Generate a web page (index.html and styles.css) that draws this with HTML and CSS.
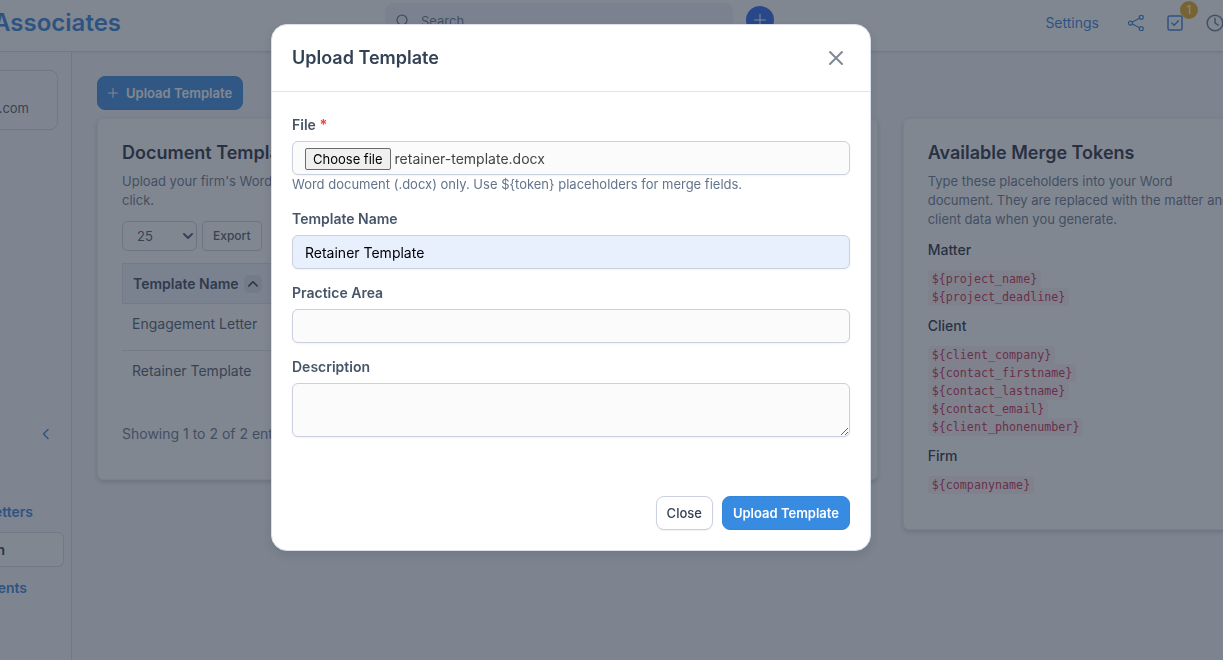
FILE: index.html
```html
<!DOCTYPE html>
<html lang="en">
<head>
<meta charset="utf-8">
<title>Upload Template</title>
<link rel="stylesheet" href="styles.css">
</head>
<body>
<header class="topbar">
  <a class="brand" href="#">Associates</a>
  <div class="search">
    <svg class="icon" viewBox="0 0 16 16"><circle cx="7" cy="7" r="5"/><path d="M10.6 10.6 14 14"/></svg>
    <input class="search-input" type="search" placeholder="Search" aria-label="Search">
  </div>
  <button class="quick-add" aria-label="Create"><svg class="icon" viewBox="0 0 16 16"><path d="M8 1.5v13M1.5 8h13"/></svg></button>
  <nav class="top-links">
    <a class="settings" href="#">Settings</a>
    <a class="top-icon" href="#" aria-label="Share"><svg class="icon" viewBox="0 0 16 16"><circle cx="2.5" cy="8" r="2"/><circle cx="13.3" cy="2.3" r="2"/><circle cx="13.3" cy="13.7" r="2"/><path d="m4.3 7 7.2-3.8M4.3 9l7.2 3.8"/></svg></a>
    <a class="top-icon tasks" href="#" aria-label="Tasks"><svg class="icon check-icon" viewBox="0 0 16 16"><rect x="1" y="1" width="14" height="14" rx="1.5"/><path d="m4.8 8 2.3 2.3 4.3-4.6"/></svg><span class="badge">1</span></a>
    <a class="top-icon clock" href="#" aria-label="Timers"><svg class="icon" viewBox="0 0 18 18"><circle cx="9" cy="9" r="7.8"/><path d="M9 4.2V9l3.2 2.2"/></svg></a>
  </nav>
</header>

<div class="shell">
  <aside class="sidebar">
    <div class="profile"><span>t.com</span></div>
    <button class="collapse" aria-label="Collapse menu"><svg class="icon" viewBox="0 0 12 12"><path d="M8 1.5 3.5 6 8 10.5"/></svg></button>
    <nav class="side-nav">
      <a class="side-link first" href="#">etters</a>
      <a class="side-link active" href="#">n</a>
      <a class="side-link last" href="#">ents</a>
    </nav>
  </aside>

  <main class="main">
    <button class="btn btn-primary page-action"><svg class="icon" viewBox="0 0 12 12"><path d="M6 .5v11M.5 6h11"/></svg>Upload Template</button>
    <div class="columns">
      <section class="card">
        <h2 class="heading">Document Templates</h2>
        <p class="lead">Upload your firm's Word templates once, then generate a document with one<br>click.</p>
        <div class="tools">
          <span class="select-wrap">
            <select class="length" aria-label="Rows per page"><option>25</option></select>
            <svg class="icon" viewBox="0 0 10 10"><path d="m1 3 4 4 4-4"/></svg>
          </span>
          <button class="export">Export</button>
        </div>
        <table class="table">
          <thead><tr><th><span class="th-inner">Template Name <span class="sort"><svg class="icon" viewBox="0 0 10 10"><path d="m.8 7 4.2-4.2L9.2 7"/></svg></span></span></th></tr></thead>
          <tbody><tr><td>Engagement Letter</td></tr><tr><td>Retainer Template</td></tr></tbody>
        </table>
        <p class="summary">Showing 1 to 2 of 2 entries</p>
      </section>

      <section class="card">
        <h2 class="heading">Available Merge Tokens</h2>
        <p class="lead">Type these placeholders into your Word document. They are replaced with the matter and client data when you generate.</p>
        <h3 class="group">Matter</h3>
        <ul class="token-list"><li><code>${project_name}</code></li><li><code>${project_deadline}</code></li></ul>
        <h3 class="group">Client</h3>
        <ul class="token-list"><li><code>${client_company}</code></li><li><code>${contact_firstname}</code></li><li><code>${contact_lastname}</code></li><li><code>${contact_email}</code></li><li><code>${client_phonenumber}</code></li></ul>
        <h3 class="group">Firm</h3>
        <ul class="token-list"><li><code>${companyname}</code></li></ul>
      </section>
    </div>
  </main>
</div>

<div class="backdrop">
  <form class="modal" role="dialog" aria-modal="true" aria-labelledby="modal-title">
    <div class="modal-head">
      <h1 class="heading modal-title" id="modal-title">Upload Template</h1>
      <button class="dismiss" type="button" aria-label="Dismiss"><svg class="icon" viewBox="0 0 16 16"><path d="m2 2 12 12M14 2 2 14"/></svg></button>
    </div>
    <div class="modal-body">
      <div class="field">
        <label for="file">File <span class="required">*</span></label>
        <div class="control file">
          <span class="choose">Choose file</span><span>retainer-template.docx</span>
          <input class="file-input" id="file" type="file" accept=".docx">
        </div>
        <p class="help">Word document (.docx) only. Use ${token} placeholders for merge fields.</p>
      </div>
      <div class="field">
        <label for="name">Template Name</label>
        <input class="control filled" id="name" type="text" value="Retainer Template">
      </div>
      <div class="field">
        <label for="area">Practice Area</label>
        <input class="control" id="area" type="text">
      </div>
      <div class="field">
        <label for="description">Description</label>
        <textarea class="control area" id="description"></textarea>
      </div>
    </div>
    <div class="modal-foot">
      <button class="btn btn-default" type="button">Close</button>
      <button class="btn btn-primary" type="submit">Upload Template</button>
    </div>
  </form>
</div>
</body>
</html>
```

FILE: styles.css
```css
* { box-sizing: border-box; }

html, body { height: 100%; }

body {
  margin: 0;
  overflow: hidden;
  display: flex;
  flex-direction: column;
  background: #f5f8fb;
  color: #475569;
  font: 14px/20px Inter, "Liberation Sans", sans-serif;
}

button, input, select, textarea { font: inherit; color: inherit; margin: 0; }
h1, h2, h3, p, ul { margin: 0; padding: 0; }
a { color: #2f80d8; text-decoration: none; }

.icon {
  display: block;
  fill: none;
  stroke: currentColor;
  stroke-width: 1.25;
  stroke-linecap: round;
  stroke-linejoin: round;
  width: 16px;
  height: 16px;
}

/* Top bar */
.topbar {
  flex: none;
  display: flex;
  align-items: flex-start;
  height: 52px;
  background: #fff;
  border-bottom: 1px solid #d5dbe3;
  box-shadow: 0 1px 2px rgba(15, 23, 42, .08);
}
.brand {
  width: 121px;
  display: flex;
  justify-content: flex-end;
  margin-right: 264px;
  padding-top: 9px;
  font-size: 24px;
  line-height: 28px;
  font-weight: 600;
}
.search {
  flex: 0 1 348px;
  display: flex;
  align-items: center;
  gap: 10px;
  height: 36px;
  margin-top: 3px;
  padding: 0 10px;
  border-radius: 8px;
  background: #f1f3f9;
  color: #64748b;
}
.search-input {
  flex: 1;
  min-width: 0;
  padding: 0;
  border: 0;
  background: none;
  font-size: 13px;
}
.search-input::placeholder { color: #64748b; opacity: 1; }
.quick-add {
  display: grid;
  place-items: center;
  width: 28px;
  height: 28px;
  margin: 6px 0 0 13px;
  padding: 0;
  border: 0;
  border-radius: 50%;
  background: #2563eb;
  color: #fff;
}
.quick-add .icon { width: 14px; height: 14px; }
.top-links {
  display: flex;
  align-items: center;
  height: 20px;
  margin: 13px 0 0 auto;
}
.settings { margin-right: 29px; }
.top-icon { position: relative; margin-right: 23px; }
.check-icon { stroke-width: 1.5; }
.clock { margin-right: -1px; color: #64748b; }
.clock .icon { width: 18px; height: 18px; stroke-width: 1.5; }
.badge {
  position: absolute;
  left: 13px;
  top: -14px;
  width: 18px;
  height: 18px;
  border-radius: 50%;
  background: #e6a817;
  color: #fff;
  font-size: 12px;
  line-height: 18px;
  text-align: center;
}

/* Sidebar */
.shell { flex: 1; display: flex; min-height: 0; }
.sidebar {
  flex: none;
  width: 72px;
  display: flex;
  flex-direction: column;
  overflow: hidden;
  border-right: 1px solid #d5dbe3;
  background: #f8fafc;
}
.profile {
  display: flex;
  justify-content: flex-end;
  align-items: flex-end;
  height: 60px;
  margin: 18px 13px 0 0;
  padding: 0 28px 11px 0;
  border: 1px solid #d5dbe3;
  border-left: 0;
  border-radius: 0 8px 8px 0;
  background: #fafbfd;
  font-size: 13px;
}
.collapse {
  align-self: flex-end;
  margin: 298px 19px 0 0;
  padding: 0;
  border: 0;
  background: none;
  color: #2f80d8;
}
.collapse .icon { width: 12px; height: 12px; stroke-width: 1.5; }
.side-nav { margin-top: 54px; }
.side-link {
  display: flex;
  justify-content: flex-end;
  align-items: center;
  height: 35px;
  margin: 0 7px 3px 0;
  font-weight: 600;
}
.first { padding-right: 31px; }
.active {
  padding-right: 58px;
  border: 1px solid #d5dbe3;
  border-left: 0;
  border-radius: 0 6px 6px 0;
  background: #fff;
  color: #1e293b;
}
.last { padding-right: 37px; }

/* Main area */
.main { flex: 1; min-width: 0; padding: 24px 0 0 25px; }
.btn {
  display: inline-flex;
  align-items: center;
  justify-content: center;
  height: 34px;
  padding: 0 10px;
  border: 1px solid #cbd0de;
  border-radius: 8px;
  font-size: 13px;
  font-weight: 600;
  white-space: nowrap;
}
.btn-primary {
  border-color: #3385dc;
  background: #378be0;
  color: #fff;
}
.btn-default {
  background: #fff;
  color: #334155;
  font-weight: 500;
  box-shadow: 0 1px 2px rgba(15, 23, 42, .06);
}
.page-action { gap: 8px; }
.page-action .icon { width: 10px; height: 10px; }
.columns {
  display: grid;
  grid-template-columns: 13fr 6fr;
  gap: 25px;
  align-items: start;
  margin: 8px -40px 0 0;
}
.card {
  padding: 22px 24px 35px;
  border: 1px solid #edf0f5;
  border-radius: 6px;
  background: #fff;
  box-shadow: 0 2px 5px rgba(15, 23, 42, .2);
}
.heading {
  color: #1e293b;
  font-size: 18px;
  line-height: 24px;
  font-weight: 600;
}
.lead {
  margin-top: 7px;
  margin-bottom: 11px;
  color: #64748b;
  font-size: 13px;
  line-height: 19px;
}
.tools { display: flex; gap: 5px; }
.select-wrap { display: grid; align-items: center; width: 75px; }
.select-wrap > * { grid-area: 1 / 1; }
.select-wrap .icon {
  justify-self: end;
  width: 10px;
  height: 10px;
  margin-right: 4px;
  stroke-width: 2;
  pointer-events: none;
}
.length, .export {
  height: 30px;
  border: 1px solid #cbd0de;
  border-radius: 6px;
  background: #fff;
}
.length { appearance: none; width: 100%; padding: 0 14px; font-size: 13px; }
.export {
  padding: 0 10px;
  border-radius: 4px;
  font-size: 12px;
  font-weight: 500;
}
.table {
  width: 100%;
  margin-top: 12px;
  border-collapse: separate;
  border-spacing: 0;
  text-align: left;
}
.table th {
  height: 41px;
  padding: 0 10px;
  border: 1px solid #dde2ec;
  background: #f1f3f9;
  color: #334155;
  font-weight: 600;
}
.th-inner { display: flex; align-items: center; gap: 5px; }
.sort {
  display: grid;
  place-items: center;
  width: 18px;
  height: 18px;
  border-radius: 5px;
  background: #dce1e9;
  color: #1e293b;
}
.sort .icon { width: 10px; height: 10px; stroke-width: 1.5; }
.table td {
  height: 46px;
  padding: 10px 10px 0;
  vertical-align: top;
}
.table tr + tr td { border-top: 1px solid #dde2ec; }
.summary { margin-top: 28px; color: #64748b; }
.group {
  margin-top: 10px;
  color: #1e293b;
  font-size: 14px;
  line-height: 20px;
  font-weight: 500;
}
.token-list {
  margin-top: 10px;
  list-style: none;
  font-size: 13px;
  line-height: 18px;
}
.token-list li { display: flex; }
.token-list code {
  padding: 0 4px;
  border-radius: 4px;
  background: #f9f2f4;
  color: #c7254e;
  font-family: "DejaVu Sans Mono", monospace;
  font-size: 90%;
}

.backdrop {
  position: fixed;
  inset: 0;
  display: flex;
  justify-content: center;
  align-items: flex-start;
  padding: 24px 105px 24px 24px;
  background: rgba(45, 55, 72, .6);
}
.modal {
  flex: 0 1 600px;
  border: 1px solid #dce0e8;
  border-radius: 16px;
  background: #fff;
  box-shadow: 0 4px 10px rgba(15, 23, 42, .12);
}
.modal-head {
  display: flex;
  align-items: center;
  justify-content: space-between;
  padding: 20px 26px 21px 20px;
  border-bottom: 1px solid #dfe3ea;
}
.modal-title { color: #334155; line-height: 25px; }
.dismiss {
  padding: 0;
  border: 0;
  background: none;
  color: #818998;
}
.dismiss .icon { stroke-width: 2; }
.modal-body { display: grid; gap: 14px; padding: 23px 20px 0; }
.field { display: flex; flex-direction: column; }
.field label {
  margin-bottom: 6px;
  color: #475569;
  font-weight: 600;
}
.required { color: #ef4444; font-weight: 700; }
.control {
  width: 100%;
  height: 34px;
  padding: 0 12px;
  border: 1px solid #cbd0de;
  border-radius: 6px;
  background: #fbfbfb;
  box-shadow: 0 1px 2px rgba(15, 23, 42, .05);
}
.file {
  position: relative;
  display: flex;
  align-items: center;
  gap: 4px;
  padding-top: 2px;
  color: #444;
}
.file-input {
  position: absolute;
  inset: 0;
  width: 100%;
  opacity: 0;
}
.choose {
  padding: 0 7px;
  border: 1px solid #6b6b6b;
  border-radius: 2px;
  background: #efefef;
  color: #000;
  font-size: 13px;
}
.filled { background: #e8effd; color: #000; }
.area { height: 54px; resize: vertical; }
.help {
  padding-bottom: 2px;
  color: #64748b;
  font-size: 13px;
  line-height: 18px;
}
.modal-foot {
  display: flex;
  justify-content: flex-end;
  gap: 9px;
  padding: 59px 20px 20px;
}
```
